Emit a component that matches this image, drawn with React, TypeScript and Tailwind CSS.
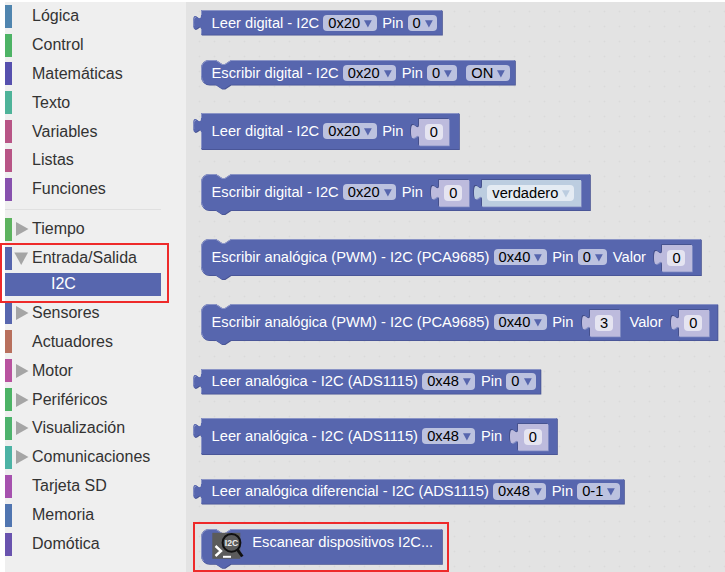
import React from "react";

type Category = { name: string; color: string; gap: string; arrow?: "right" | "down"; low?: boolean };

const topCategories: Category[] = [
  { name: "Lógica", color: "bg-[#5085af]", gap: "mt-[3px]" },
  { name: "Control", color: "bg-[#4db365]", gap: "mt-[6px]" },
  { name: "Matemáticas", color: "bg-[#5650ae]", gap: "mt-[5px]", low: true },
  { name: "Texto", color: "bg-[#4eb399]", gap: "mt-[6px]", low: true },
  { name: "Variables", color: "bg-[#b85586]", gap: "mt-[6px]", low: true },
  { name: "Listas", color: "bg-[#b85586]", gap: "mt-[6px]" },
  { name: "Funciones", color: "bg-[#8751ae]", gap: "mt-[6px]" },
];

const ioCategories: Category[] = [
  { name: "Tiempo", color: "bg-[#5db35f]", gap: "mt-[8px]", arrow: "right" },
  { name: "Entrada/Salida", color: "bg-[#5766ae]", gap: "mt-[6px]", arrow: "down" },
];

const bottomCategories: Category[] = [
  { name: "Sensores", color: "bg-[#5766ae]", gap: "mt-[5px]", arrow: "right", low: true },
  { name: "Actuadores", color: "bg-[#b8705d]", gap: "mt-[6px]", low: true },
  { name: "Motor", color: "bg-[#b8539f]", gap: "mt-[6px]", arrow: "right", low: true },
  { name: "Periféricos", color: "bg-[#4cb365]", gap: "mt-[6px]", arrow: "right", low: true },
  { name: "Visualización", color: "bg-[#4eb36d]", gap: "mt-[6px]", arrow: "right" },
  { name: "Comunicaciones", color: "bg-[#4cb3a5]", gap: "mt-[6px]", arrow: "right" },
  { name: "Tarjeta SD", color: "bg-[#a651ae]", gap: "mt-[6px]" },
  { name: "Memoria", color: "bg-[#5075b0]", gap: "mt-[6px]" },
  { name: "Domótica", color: "bg-[#6953ae]", gap: "mt-[6px]" },
];

function Row({ item }: { item: Category }) {
  const lift = item.low ? "pb-0" : "pb-[2px]";
  return (
    <div className={`flex h-[23px] ${item.gap}`}>
      <span className={`h-[23px] w-[7px] shrink-0 ${item.color}`} />
      <span className={`flex w-5 shrink-0 items-center pl-[4px] ${lift}`}>
        {item.arrow === "right" && (
          <svg width="14" height="14" className="text-[#a5a5a5]">
            <path d="M0 0 L12.5 7 L0 14 Z" fill="currentColor" />
          </svg>
        )}
        {item.arrow === "down" && (
          <svg width="16" height="14" className="-ml-[2px] shrink-0 text-[#a5a5a5]">
            <path d="M0.3 1.5 H14 L7.2 14 Z" fill="currentColor" />
          </svg>
        )}
      </span>
      <span className={`flex items-center text-[16px] leading-[21px] text-[#333] ${lift}`}>{item.name}</span>
    </div>
  );
}

const VALUE_TAB = "V20 c0,-10 -8,8 -8,-7.5 s8,2.5 8,-7.5 Z";

function outline(kind: "value" | "statement", w: number, h: number) {
  return kind === "value"
    ? `M0,0 H${w} V${h} H0 ${VALUE_TAB}`
    : `M0,8 A8,8 0 0 1 8,0 H15 l6,4 h3 l6,-4 H${w} V${h} H29.5 l-6,4 h-3 l-6,-4 H8 a8,8 0 0 1 -8,-8 Z`;
}

function highlight(kind: "value" | "statement", w: number, h: number) {
  return kind === "value"
    ? `M0.5,${h - 1} V19 M-7.2,16 Q-8.2,7 -5,7.3 M0.5,5 V0.5 H${w - 0.5}`
    : `M2.7,${h - 3} A7.5,7.5 0 0 1 0.5,${h - 8} V8 A7.5,7.5 0 0 1 8,0.5 H15 l6,4 h3 l6,-4 H${w - 0.5}`;
}

type BlockProps = {
  kind: "value" | "statement";
  w: number;
  h: number;
  gap: string;
  children: React.ReactNode;
};

function Block({ kind, w, h, gap, children }: BlockProps) {
  return (
    <div className={`relative shrink-0 ${gap}`} style={{ width: w, height: h }}>
      <svg className="absolute left-0 top-0 overflow-visible" width={w} height={h}>
        <path d={outline(kind, w, h)} fill="#465291" transform="translate(0.8,0.8)" />
        <path d={outline(kind, w, h)} fill="#5766ae" />
        <path d={highlight(kind, w, h)} fill="none" stroke="#8a94c6" strokeWidth="1" />
      </svg>
      <div className={`relative flex pl-[10.3px] whitespace-nowrap ${h > 30 ? "pt-[9.5px]" : "pt-[4.5px]"}`}>
        {children}
      </div>
    </div>
  );
}

function Label({ children }: { children: React.ReactNode }) {
  return <span className="h-4 leading-4 text-white">{children}</span>;
}

function Caret({ color }: { color: string }) {
  return (
    <svg width="8" height="8" className="ml-[4px] mt-[5px] shrink-0">
      <path d="M0 0.3 H7.8 L3.9 7.5 Z" fill={color} />
    </svg>
  );
}

function Dropdown({ children }: { children: React.ReactNode }) {
  return (
    <span className="ml-[4.2px] mr-[5.5px] flex h-[16.5px] rounded bg-white/60 pl-[5px] pr-[4.5px] leading-4 text-black">
      {children}
      <Caret color="#5766ae" />
    </span>
  );
}

function Slot({ w, gap, bool, children }: { w: number; gap: string; bool?: boolean; children: React.ReactNode }) {
  const fill = bool ? "#bccde0" : "#bdbbdd";
  return (
    <span className={`relative -mt-[4px] block h-[27px] shrink-0 ${gap}`} style={{ width: w }}>
      <svg className="absolute left-0 top-0 overflow-visible" width={w} height="27">
        <path d={outline("value", w, 26.5)} fill="#424d86" transform="translate(-0.8,-0.8)" />
        <path d={outline("value", w, 26.5)} fill="#8a94c6" transform="translate(0.8,0.8)" />
        <path d={outline("value", w, 26.5)} fill={fill} />
      </svg>
      <span className="relative top-[5px] ml-[5.5px] mr-[6.5px] flex h-[16.5px] rounded bg-white/60 pl-[5px] leading-[17px] text-black">
        {children}
        {bool && <Caret color="#bccde0" />}
      </span>
    </span>
  );
}

function ScanIcon() {
  return (
    <svg width="34" height="30" className="-mt-[6.5px] shrink-0">
      <rect x="0.3" y="0.8" width="28" height="26" fill="#5b5b5b" />
      <path d="M3.5 14 L9 19 L3.5 24" fill="none" stroke="#fff" strokeWidth="2.4" />
      <path d="M11 24.8 H19" stroke="#fff" strokeWidth="2" />
      <circle cx="19.5" cy="10.8" r="8.9" fill="#5b5b5b" stroke="#111" strokeWidth="2" />
      <path d="M25.3 17.5 L30.3 24.5" stroke="#111" strokeWidth="3" />
      <text x="12.8" y="14" fill="#eee" fontSize="9" fontWeight="700" textLength="13.4" lengthAdjust="spacingAndGlyphs">
        I2C
      </text>
    </svg>
  );
}

export default function App() {
  return (
    <div className="relative flex h-[572px] w-[725px] overflow-hidden bg-white pl-[5px] pt-[2px] font-['Liberation_Sans',Arial,sans-serif]">
      <nav className="flex w-[181px] shrink-0 flex-col bg-[#efefef]">
        {topCategories.map((c) => (
          <Row key={c.name} item={c} />
        ))}
        <hr className="mt-[8px] h-px w-[156px] border-0 bg-[#e0e0e0]" />
        {ioCategories.map((c) => (
          <Row key={c.name} item={c} />
        ))}
        <div className="mt-[3px] h-[23px] w-[156px] bg-[#5766ae] pl-[46px] text-[16px] leading-[21px] text-white">
          I2C
        </div>
        {bottomCategories.map((c) => (
          <Row key={c.name} item={c} />
        ))}
      </nav>

      <main className="flex flex-1 flex-col bg-[#e3e3e3] bg-[radial-gradient(circle_at_50%_50%,#dadada_0.6px,transparent_1.2px)] bg-[length:15px_15px] bg-[position:6px_2px] pl-[15.3px] text-[14.667px]">
        <Block kind="value" w={241} h={24.8} gap="mt-[8.4px]">
          <Label>Leer digital - I2C</Label>
          <Dropdown>0x20</Dropdown>
          <Label>Pin</Label>
          <Dropdown>0</Dropdown>
        </Block>
        <Block kind="statement" w={314} h={24.8} gap="mt-[25.1px]">
          <Label>Escribir digital - I2C</Label>
          <Dropdown>0x20</Dropdown>
          <Label>Pin</Label>
          <Dropdown>0</Dropdown>
          <span className="w-[4.5px]" />
          <Dropdown>ON</Dropdown>
        </Block>
        <Block kind="value" w={258} h={36.3} gap="mt-[28.3px]">
          <Label>Leer digital - I2C</Label>
          <Dropdown>0x20</Dropdown>
          <Label>Pin</Label>
          <Slot w={30} gap="ml-[16px]">0</Slot>
        </Block>
        <Block kind="statement" w={389} h={36.3} gap="mt-[24.7px]">
          <Label>Escribir digital - I2C</Label>
          <Dropdown>0x20</Dropdown>
          <Label>Pin</Label>
          <Slot w={30} gap="ml-[16px]">0</Slot>
          <Slot w={99} gap="ml-[13px]" bool>verdadero</Slot>
        </Block>
        <Block kind="statement" w={500} h={36.3} gap="mt-[28.7px]">
          <Label>Escribir analógica (PWM) - I2C (PCA9685)</Label>
          <Dropdown>0x40</Dropdown>
          <Label>Pin</Label>
          <Dropdown>0</Dropdown>
          <Label>Valor</Label>
          <Slot w={30} gap="ml-[16px]">0</Slot>
        </Block>
        <Block kind="statement" w={516.5} h={36.3} gap="mt-[28.7px]">
          <Label>Escribir analógica (PWM) - I2C (PCA9685)</Label>
          <Dropdown>0x40</Dropdown>
          <Label>Pin</Label>
          <Slot w={30} gap="ml-[16px] mr-[10px]">3</Slot>
          <Label>Valor</Label>
          <Slot w={30} gap="ml-[16px]">0</Slot>
        </Block>
        <Block kind="value" w={339.5} h={24.8} gap="mt-[28.2px]">
          <Label>Leer analógica - I2C (ADS1115)</Label>
          <Dropdown>0x48</Dropdown>
          <Label>Pin</Label>
          <Dropdown>0</Dropdown>
        </Block>
        <Block kind="value" w={356} h={36.3} gap="mt-[24.7px]">
          <Label>Leer analógica - I2C (ADS1115)</Label>
          <Dropdown>0x48</Dropdown>
          <Label>Pin</Label>
          <Slot w={30} gap="ml-[16px]">0</Slot>
        </Block>
        <Block kind="value" w={423} h={24.8} gap="mt-[24.4px]">
          <Label>Leer analógica diferencial - I2C (ADS1115)</Label>
          <Dropdown>0x48</Dropdown>
          <Label>Pin</Label>
          <Dropdown>0-1</Dropdown>
        </Block>
        <Block kind="statement" w={241} h={35} gap="mt-[25.2px]">
          <ScanIcon />
          <span className="-mt-[4.5px] ml-[6.7px] h-4 leading-4 text-white">Escanear dispositivos I2C...</span>
        </Block>
      </main>

      <div className="absolute left-0 top-[243px] h-[60px] w-[169px] border-2 border-[#ee2a2a]" />
      <div className="absolute left-[193px] top-[522px] h-[50px] w-[256px] border-2 border-[#ee2a2a]" />
    </div>
  );
}
